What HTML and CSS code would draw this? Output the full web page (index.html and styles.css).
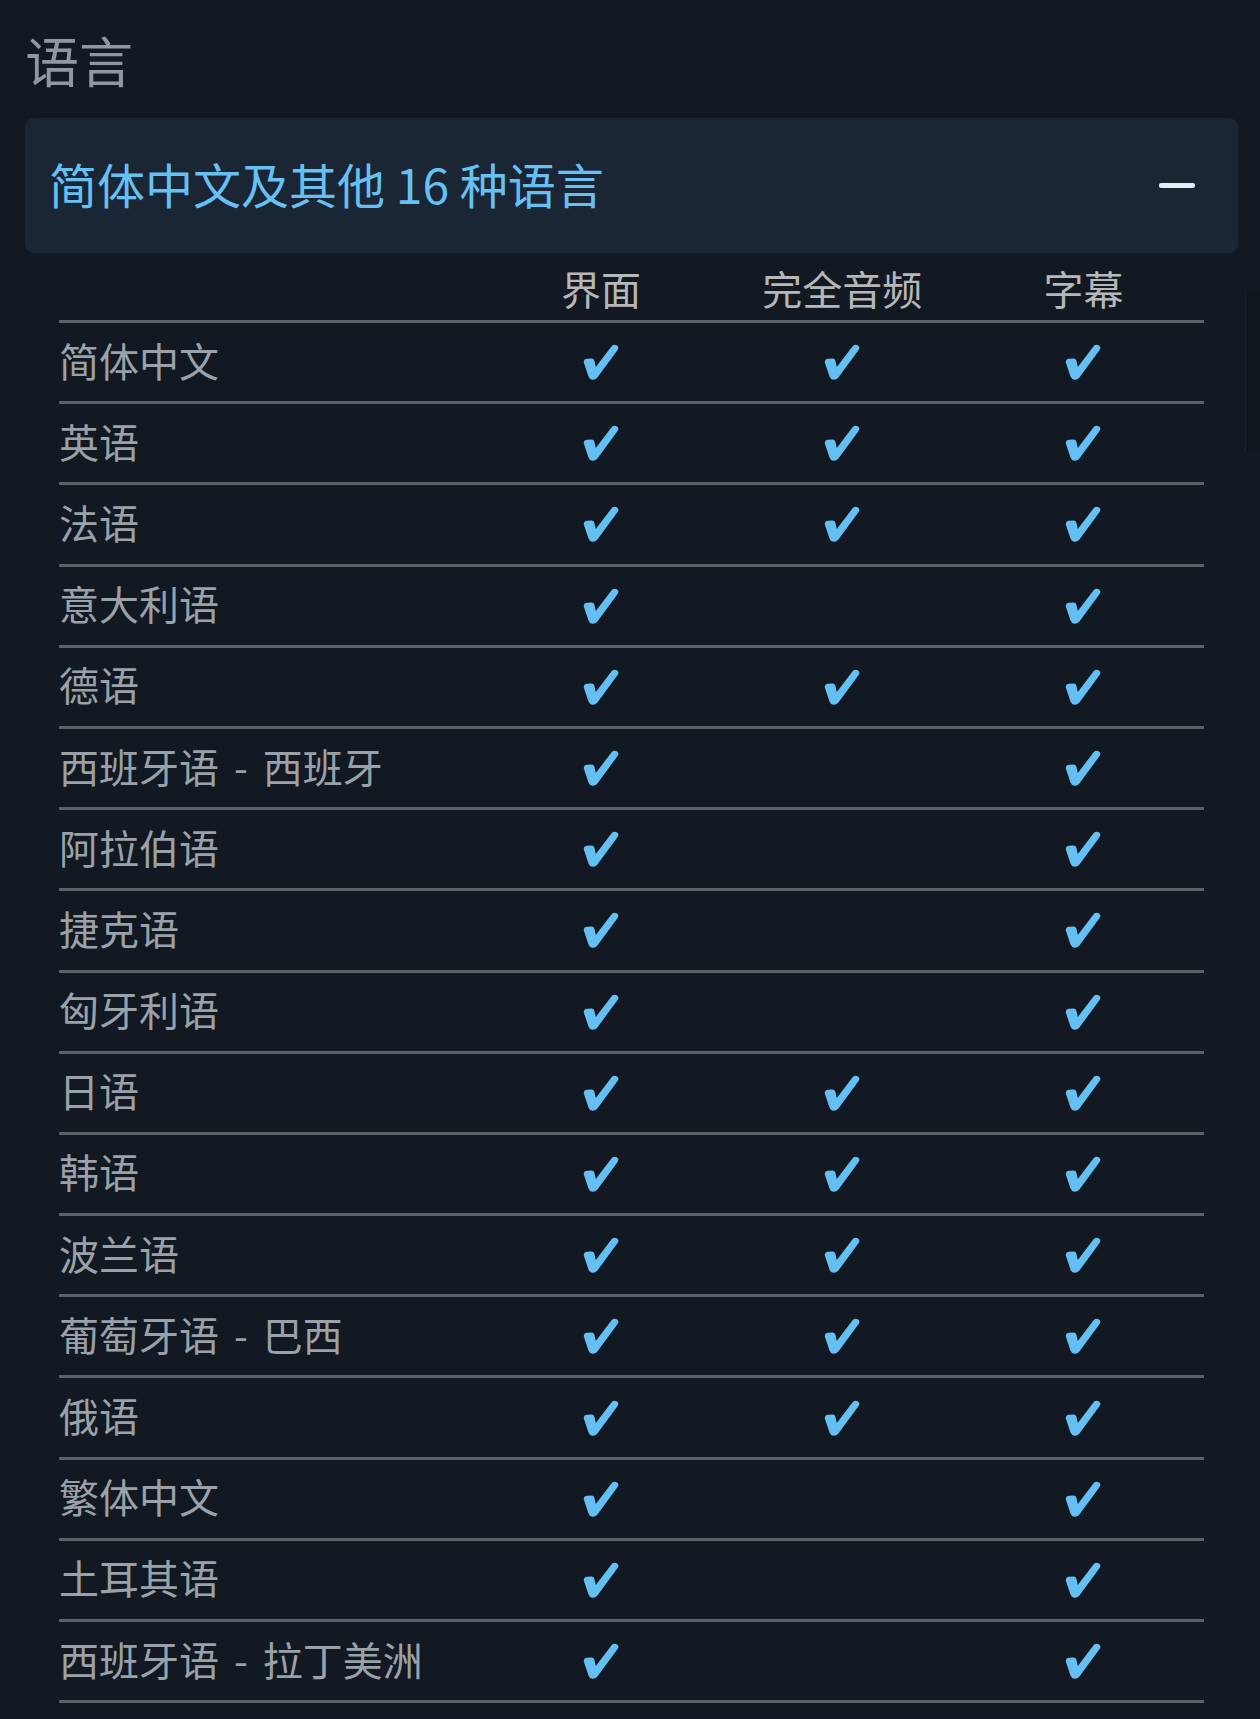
FILE: index.html
```html
<!DOCTYPE html>
<html lang="zh-CN">
<head>
<meta charset="utf-8">
<title>语言</title>
<link rel="stylesheet" href="styles.css">
</head>
<body>
<svg class="defs" width="0" height="0" aria-hidden="true">
  <symbol id="chk" viewBox="0 0 36 36">
    <path d="M0.8 18.6 Q0.6 15.2 4 14.8 L8.2 14.4 Q10.8 14.2 11.4 16.8 L12.8 23 L28.8 2 Q30.8 -0.2 33.8 1.3 Q36.6 3.1 34.6 6 L14.4 33.4 Q12.4 36 9.4 35.8 Q6.4 35.5 5.5 32.6 Z" fill="currentColor"/>
  </symbol>
</svg>
<div class="page">
  <h2 class="title">语言</h2>
  <div class="summary">
    <span class="summary-text">简体中文及其他 16 种语言</span>
    <span class="minus"></span>
  </div>
  <div class="langs">
    <div class="row head">
      <div class="cell name"></div>
      <div class="cell">界面</div>
      <div class="cell">完全音频</div>
      <div class="cell">字幕</div>
    </div>
    <div class="row"><div class="cell name">简体中文</div><div class="cell"><svg class="ck"><use href="#chk"/></svg></div><div class="cell"><svg class="ck"><use href="#chk"/></svg></div><div class="cell"><svg class="ck"><use href="#chk"/></svg></div></div>
    <div class="row"><div class="cell name">英语</div><div class="cell"><svg class="ck"><use href="#chk"/></svg></div><div class="cell"><svg class="ck"><use href="#chk"/></svg></div><div class="cell"><svg class="ck"><use href="#chk"/></svg></div></div>
    <div class="row"><div class="cell name">法语</div><div class="cell"><svg class="ck"><use href="#chk"/></svg></div><div class="cell"><svg class="ck"><use href="#chk"/></svg></div><div class="cell"><svg class="ck"><use href="#chk"/></svg></div></div>
    <div class="row"><div class="cell name">意大利语</div><div class="cell"><svg class="ck"><use href="#chk"/></svg></div><div class="cell"></div><div class="cell"><svg class="ck"><use href="#chk"/></svg></div></div>
    <div class="row"><div class="cell name">德语</div><div class="cell"><svg class="ck"><use href="#chk"/></svg></div><div class="cell"><svg class="ck"><use href="#chk"/></svg></div><div class="cell"><svg class="ck"><use href="#chk"/></svg></div></div>
    <div class="row"><div class="cell name">西班牙语 - 西班牙</div><div class="cell"><svg class="ck"><use href="#chk"/></svg></div><div class="cell"></div><div class="cell"><svg class="ck"><use href="#chk"/></svg></div></div>
    <div class="row"><div class="cell name">阿拉伯语</div><div class="cell"><svg class="ck"><use href="#chk"/></svg></div><div class="cell"></div><div class="cell"><svg class="ck"><use href="#chk"/></svg></div></div>
    <div class="row"><div class="cell name">捷克语</div><div class="cell"><svg class="ck"><use href="#chk"/></svg></div><div class="cell"></div><div class="cell"><svg class="ck"><use href="#chk"/></svg></div></div>
    <div class="row"><div class="cell name">匈牙利语</div><div class="cell"><svg class="ck"><use href="#chk"/></svg></div><div class="cell"></div><div class="cell"><svg class="ck"><use href="#chk"/></svg></div></div>
    <div class="row"><div class="cell name">日语</div><div class="cell"><svg class="ck"><use href="#chk"/></svg></div><div class="cell"><svg class="ck"><use href="#chk"/></svg></div><div class="cell"><svg class="ck"><use href="#chk"/></svg></div></div>
    <div class="row"><div class="cell name">韩语</div><div class="cell"><svg class="ck"><use href="#chk"/></svg></div><div class="cell"><svg class="ck"><use href="#chk"/></svg></div><div class="cell"><svg class="ck"><use href="#chk"/></svg></div></div>
    <div class="row"><div class="cell name">波兰语</div><div class="cell"><svg class="ck"><use href="#chk"/></svg></div><div class="cell"><svg class="ck"><use href="#chk"/></svg></div><div class="cell"><svg class="ck"><use href="#chk"/></svg></div></div>
    <div class="row"><div class="cell name">葡萄牙语 - 巴西</div><div class="cell"><svg class="ck"><use href="#chk"/></svg></div><div class="cell"><svg class="ck"><use href="#chk"/></svg></div><div class="cell"><svg class="ck"><use href="#chk"/></svg></div></div>
    <div class="row"><div class="cell name">俄语</div><div class="cell"><svg class="ck"><use href="#chk"/></svg></div><div class="cell"><svg class="ck"><use href="#chk"/></svg></div><div class="cell"><svg class="ck"><use href="#chk"/></svg></div></div>
    <div class="row"><div class="cell name">繁体中文</div><div class="cell"><svg class="ck"><use href="#chk"/></svg></div><div class="cell"></div><div class="cell"><svg class="ck"><use href="#chk"/></svg></div></div>
    <div class="row"><div class="cell name">土耳其语</div><div class="cell"><svg class="ck"><use href="#chk"/></svg></div><div class="cell"></div><div class="cell"><svg class="ck"><use href="#chk"/></svg></div></div>
    <div class="row"><div class="cell name">西班牙语 - 拉丁美洲</div><div class="cell"><svg class="ck"><use href="#chk"/></svg></div><div class="cell"></div><div class="cell"><svg class="ck"><use href="#chk"/></svg></div></div>
  </div>
  <div class="scroll-thumb"></div>
</div>
</body>
</html>
```

FILE: styles.css
```css
html, body {
  margin: 0;
  padding: 0;
  background: #131922;
}
body {
  font-family: "Noto Sans CJK SC", "Noto Sans", sans-serif;
  min-height: 1719px;
}
.defs {
  position: absolute;
  width: 0;
  height: 0;
  overflow: hidden;
}
.page {
  position: relative;
  padding: 28px 22px 0 25px;
}
.title {
  margin: 0 0 26px 0;
  font-size: 54px;
  line-height: 64px;
  font-weight: 400;
  color: #8f98a0;
}
.summary {
  height: 135px;
  box-sizing: border-box;
  background: #1b2634;
  border-radius: 9px;
  display: flex;
  align-items: center;
  justify-content: space-between;
  padding: 0 43px 0 24px;
}
.summary-text {
  font-size: 48px;
  line-height: 56px;
  margin-bottom: 6px;
  color: #66c0f4;
}
.minus {
  width: 36px;
  height: 5px;
  border-radius: 2px;
  background: #e6ebf1;
}
.langs {
  margin: 0 34px;
}
.row {
  display: grid;
  grid-template-columns: 421.5px 1fr 1fr 1fr;
  height: 81.2px;
  box-sizing: border-box;
  border-bottom: 3px solid #5d6167;
}
.row.head {
  height: 70px;
  padding-top: 2px;
}
.cell {
  display: flex;
  align-items: center;
  justify-content: center;
  font-size: 40px;
  line-height: 48px;
  color: #b6b7b8;
}
.cell.name {
  justify-content: flex-start;
  padding-bottom: 5px;
  word-spacing: 6px;
  color: #9aa1a8;
}
.ck {
  width: 36px;
  height: 36px;
  color: #64bff3;
}
.scroll-thumb {
  position: absolute;
  top: 290px;
  right: 0;
  width: 14px;
  height: 162px;
  background: #10161e;
  border-left: 1px solid #19212b;
}
```
